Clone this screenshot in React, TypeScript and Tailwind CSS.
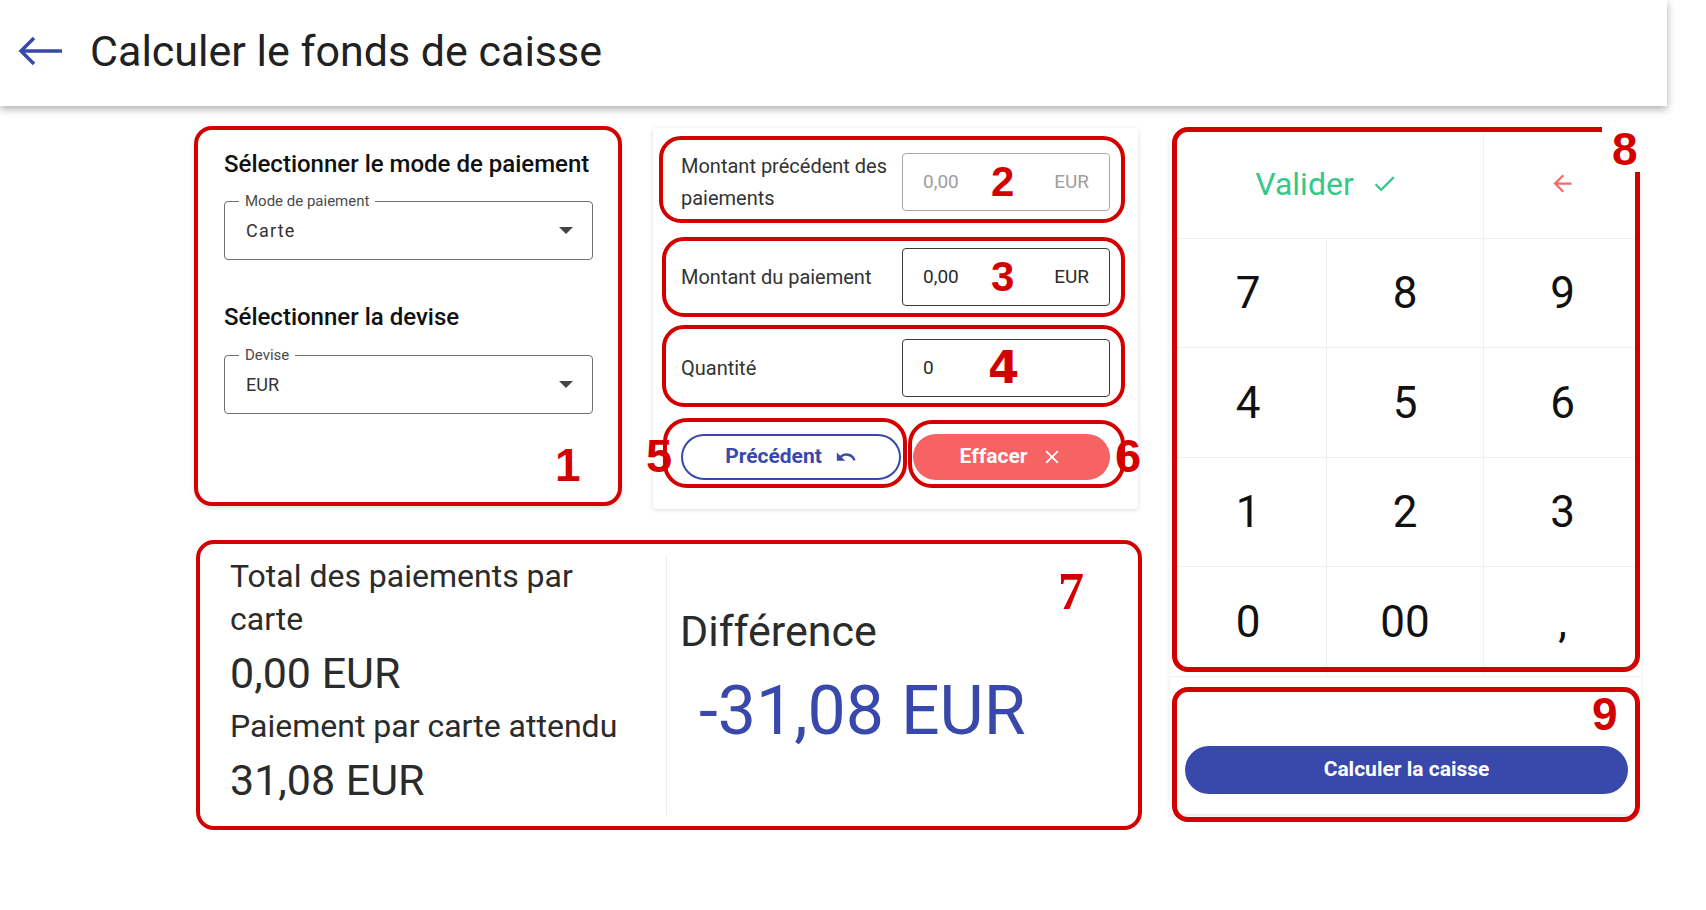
import React from "react";

// icônes (tracés type Material)
function UndoIcon() {
  return (
    <svg width="22" height="22" viewBox="0 0 24 24" fill="currentColor">
      <path d="M12.5 8c-2.65 0-5.05.99-6.9 2.6L2 7v9h9l-3.62-3.62c1.39-1.16 3.16-1.88 5.12-1.88 3.54 0 6.55 2.31 7.6 5.5l2.37-.78C21.08 11.03 17.15 8 12.5 8z" />
    </svg>
  );
}

function CloseIcon() {
  return (
    <svg width="22" height="22" viewBox="0 0 24 24" fill="currentColor">
      <path d="M19 6.41 17.59 5 12 10.59 6.41 5 5 6.41 10.59 12 5 17.59 6.41 19 12 13.41 17.59 19 19 17.59 13.41 12z" />
    </svg>
  );
}

function CheckIcon() {
  return (
    <svg width="27" height="27" viewBox="0 0 24 24" fill="currentColor">
      <path d="M9 16.17 4.83 12l-1.42 1.41L9 19 21 7l-1.41-1.41z" />
    </svg>
  );
}

function ArrowBackIcon() {
  return (
    <svg width="27" height="27" viewBox="0 0 24 24" fill="currentColor">
      <path d="M20 11H7.83l5.59-5.59L12 4l-8 8 8 8 1.41-1.41L7.83 13H20v-2z" />
    </svg>
  );
}

// repères rouges de l'annotation
function Mark({ n, className }: { n: string; className: string }) {
  return (
    <span
      className={`pointer-events-none absolute font-['Liberation_Sans',sans-serif] font-bold leading-none text-[#d40000] ${className}`}
    >
      {n}
    </span>
  );
}

function OutlinedSelect({ label, value, wide }: { label: string; value: string; wide?: boolean }) {
  return (
    <div className="relative flex h-[59px] items-center justify-between rounded-[4px] border border-[#6f6f6f] pl-[21px] pr-[19px]">
      <span className="absolute -top-[11px] left-[14px] bg-white px-[6px] text-[15px] leading-[20px] text-[#4a4a4a]">
        {label}
      </span>
      <span className={`text-[18px] text-[#333333] ${wide ? "tracking-[1.2px]" : ""}`}>{value}</span>
      <svg width="14" height="7" viewBox="0 0 14 7">
        <path d="M0 0h14L7 7z" fill="#444444" />
      </svg>
    </div>
  );
}

function Field({ value, unit, muted }: { value: string; unit?: string; muted?: boolean }) {
  return (
    <div
      className={`flex h-[58px] w-[208px] items-center justify-between rounded-[4px] border px-[20px] text-[19px] ${
        muted ? "border-[#a8a8a8] text-[#9e9e9e]" : "border-[#3c3c3c] text-[#2b2b2b]"
      }`}
    >
      <span>{value}</span>
      {unit && <span>{unit}</span>}
    </div>
  );
}

const keys = ["7", "8", "9", "4", "5", "6", "1", "2", "3", "0", "00", ","];

export default function App() {
  return (
    <div className="min-h-screen bg-white font-[Roboto,sans-serif] text-[#212121]">
      <header className="relative z-10 flex h-[106px] w-[1667px] items-center gap-[27px] bg-white pb-[4px] pl-[17px] shadow-[0_3px_8px_rgba(0,0,0,0.32)]">
        <svg width="46" height="32" viewBox="0 0 46 32" fill="none" stroke="#3949ab" strokeWidth="3.5">
          <path d="M45 16H4" />
          <path d="M17 3 4 16l13 13" />
        </svg>
        <h1 className="text-[43px] leading-none text-[#212121]">Calculer le fonds de caisse</h1>
      </header>

      <main className="flex gap-[28px] pl-[194px] pt-[20px]">
        <div className="flex w-[948px] flex-col gap-[31px]">
          <div className="flex items-start gap-[31px]">
            {/* 1 : mode de paiement / devise */}
            <section className="relative h-[380px] w-[428px] rounded-[18px] border-4 border-[#d40000] bg-white pl-[26px] pr-[25px] pt-[17px] shadow-[0_2px_4px_rgba(0,0,0,0.12)]">
              <h2 className="text-[24px] font-medium leading-[34px] text-[#111111]">
                Sélectionner le mode de paiement
              </h2>
              <div className="mt-[20px]">
                <OutlinedSelect label="Mode de paiement" value="Carte" wide />
              </div>
              <h2 className="mt-[40px] text-[24px] font-medium leading-[34px] text-[#111111]">
                Sélectionner la devise
              </h2>
              <div className="mt-[21px]">
                <OutlinedSelect label="Devise" value="EUR" />
              </div>
              <Mark n="1" className="left-[357px] top-[312px] text-[46px]" />
            </section>

            {/* 2 à 6 : montants et actions */}
            <section className="relative mt-[2px] h-[381px] w-[485px] rounded-[4px] bg-white pl-[6px] pr-[13px] pt-[8px] shadow-[0_1px_5px_rgba(0,0,0,0.14)]">
              <div className="flex h-[87px] items-center justify-between rounded-[22px] border-4 border-[#d40000] pl-[18px] pr-[11px] pt-[5px]">
                <span className="w-[215px] text-[20px] leading-[32px] text-[#333333]">
                  Montant précédent des paiements
                </span>
                <Field value="0,00" unit="EUR" muted />
              </div>
              <div className="ml-[3px] mt-[14px] flex h-[80px] items-center justify-between rounded-[22px] border-4 border-[#d40000] pl-[15px] pr-[11px]">
                <span className="text-[20px] text-[#333333]">Montant du paiement</span>
                <Field value="0,00" unit="EUR" />
              </div>
              <div className="ml-[3px] mt-[8px] flex h-[82px] items-center justify-between rounded-[22px] border-4 border-[#d40000] pl-[15px] pr-[11px] pt-[4px]">
                <span className="text-[20px] text-[#333333]">Quantité</span>
                <Field value="0" />
              </div>
              <div className="mt-[11px] flex">
                <div className="ml-[4px] h-[70px] w-[244px] rounded-[24px] border-4 border-[#d40000] pl-[14px] pr-[2px] pt-[12px]">
                  <button className="flex h-[46px] w-full items-center justify-center gap-[13px] rounded-full border-2 border-[#3949ab] text-[21px] font-bold text-[#3949ab]">
                    Précédent
                    <UndoIcon />
                  </button>
                </div>
                <div className="ml-[1px] mt-[2px] h-[68px] w-[217px] rounded-[24px] border-4 border-[#d40000] pl-[1px] pr-[11px] pt-[10px]">
                  <button className="flex h-[46px] w-full items-center justify-center gap-[14px] rounded-full bg-[#f76262] text-[21px] font-bold text-white">
                    Effacer
                    <CloseIcon />
                  </button>
                </div>
              </div>
              <Mark n="2" className="left-[338px] top-[33px] text-[42px]" />
              <Mark n="3" className="left-[338px] top-[128px] text-[42px]" />
              <span className="pointer-events-none absolute left-[335px] top-[217px] font-['DejaVu_Sans',sans-serif] text-[45px] font-bold leading-none text-[#d40000]">
                4
              </span>
              <Mark n="5" className="-left-[7px] top-[304px] text-[47px]" />
              <Mark n="6" className="left-[462px] top-[304px] text-[47px]" />
            </section>
          </div>

          {/* 7 : totaux */}
          <section className="relative ml-[2px] flex h-[290px] w-[946px] rounded-[18px] border-4 border-[#d40000] bg-white text-[#2b2b2b]">
            <div className="my-[11px] w-[467px] border-r border-[#eeeeee] pl-[30px] pr-[27px]">
              <p className="text-[32px] leading-[43px]">Total des paiements par carte</p>
              <p className="text-[43px] leading-[64px]">0,00 EUR</p>
              <p className="text-[32px] leading-[43px]">Paiement par carte attendu</p>
              <p className="text-[43px] leading-[64px]">31,08 EUR</p>
            </div>
            <div className="pl-[13px] pt-[62px]">
              <p className="text-[43px] leading-[50px]">Différence</p>
              <p className="ml-[19px] mt-[15px] text-[68px] leading-[80px] text-[#3949ab]">-31,08 EUR</p>
            </div>
            <span className="pointer-events-none absolute left-[858px] top-[22px] font-['Liberation_Serif',serif] text-[52px] font-bold leading-none text-[#d40000]">
              7
            </span>
          </section>
        </div>

        {/* 8 et 9 : pavé numérique */}
        <div className="mt-[3px] w-[471px] self-start shadow-[0_1px_4px_rgba(0,0,0,0.1)]">
          <div className="relative bg-white">
            <div className="grid grid-cols-3 grid-rows-[110px_109px_110px_109px_110px]">
              <button className="col-span-2 flex items-center justify-center gap-[17px] border-b border-r border-[#f0f0f0] text-[32px] text-[#34c98b]">
                Valider
                <CheckIcon />
              </button>
              <button className="flex items-center justify-center border-b border-[#f0f0f0] text-[#f26b6b]">
                <ArrowBackIcon />
              </button>
              {keys.map((k, i) => (
                <button
                  key={k}
                  className={`flex items-center justify-center border-b border-[#f0f0f0] text-[44px] text-[#111111] ${
                    i % 3 !== 2 ? "border-r" : ""
                  }`}
                >
                  {k}
                </button>
              ))}
            </div>
            <div className="pointer-events-none absolute -top-[2px] left-[2px] h-[545px] w-[468px] rounded-[16px] border-[5px] border-[#d40000]" />
            <span className="pointer-events-none absolute left-[432px] top-[-7px] h-[50px] w-[43px] bg-white pl-[10px] pt-[4px] font-['Liberation_Sans',sans-serif] text-[46px] font-bold leading-none text-[#d40000]">
              8
            </span>
          </div>
          <div className="relative h-[138px] border-b border-[#eeeeee] bg-white pl-[15px] pr-[13px] pt-[69px]">
            <button className="h-[48px] w-full rounded-full bg-[#3949ab] text-[21px] font-bold text-white">
              Calculer la caisse
            </button>
            <div className="pointer-events-none absolute left-[2px] top-[10px] h-[135px] w-[468px] rounded-[16px] border-[5px] border-[#d40000]" />
            <Mark n="9" className="left-[422px] top-[14px] text-[46px]" />
          </div>
        </div>
      </main>
    </div>
  );
}
